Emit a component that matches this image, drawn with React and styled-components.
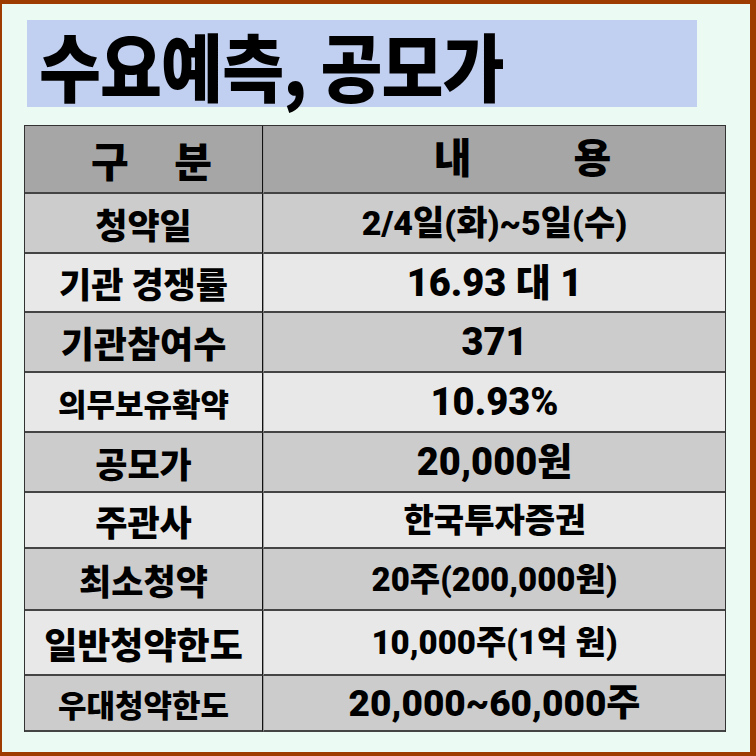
import React from "react";
import styled, { createGlobalStyle } from "styled-components";

const Global = createGlobalStyle`
  html, body { margin: 0; padding: 0; }
  body { font-family: "Noto Sans CJK KR", "Noto Sans", sans-serif; }
`;

const Frame = styled.div`
  width: 756px;
  height: 756px;
  box-sizing: border-box;
  border-style: solid;
  border-color: #9e3b00;
  border-width: 4px 6px 4px 2px;
  background: #ecfaf4;
  padding: 16px 0 0 22px;
  display: flex;
  flex-direction: column;
`;

const TitleBox = styled.div`
  margin-left: 3px;
  width: 670px;
  height: 87px;
  background: #c1cff0;
  display: flex;
  align-items: center;
  padding-left: 12px;
  box-sizing: border-box;
`;

const Title = styled.h1`
  margin: 0;
  font-family: "Noto Sans CJK KR", sans-serif;
  font-weight: 900;
  font-size: 74px;
  letter-spacing: -1px;
  color: #000;
  line-height: 1;
  white-space: nowrap;
  transform: scaleX(0.91);
  transform-origin: left center;
`;

const Table = styled.div`
  margin-top: 18px;
  width: 702px;
  display: grid;
  grid-template-columns: 238px 1fr;
  border-top: 1px solid #333;
  border-left: 1px solid #333;
  border-right: 1px solid #333;
  box-sizing: border-box;
`;

const Cell = styled.div`
  height: ${(p) => p.$h}px;
  box-sizing: border-box;
  background: ${(p) => p.$bg};
  border-bottom: 2px solid #444;
  display: flex;
  align-items: center;
  justify-content: center;
  color: #000;
  line-height: 1;
  white-space: pre;
  font-size: ${(p) => p.$fs}px;
  letter-spacing: ${(p) => p.$ls || 0}px;
  padding-left: ${(p) => p.$pl || 0}px;
`;

const LabelCell = styled(Cell)`
  border-right: 1px solid #111;
  font-family: "Noto Sans CJK KR", sans-serif;
  font-weight: 900;
`;

const ValueCell = styled(Cell)`
  border-left: 1px solid #9a9a9a;
  font-family: Roboto, "Noto Sans CJK KR", sans-serif;
  font-weight: 900;
`;

const HEADER_BG = "#a6a6a6";
const DARK = "#cccccc";
const LIGHT = "#e8e8e8";

const rows = [
  { label: "청약일", value: "2/4일(화)~5일(수)", h: 60, lf: 35, vf: 34 },
  { label: "기관 경쟁률", value: "16.93 대 1", h: 59, lf: 35, vf: 38 },
  { label: "기관참여수", value: "371", h: 60, lf: 36, vf: 38 },
  { label: "의무보유확약", value: "10.93%", h: 60, lf: 31, vf: 38 },
  { label: "공모가", value: "20,000원", h: 60, lf: 35, vf: 38 },
  { label: "주관사", value: "한국투자증권", h: 56, lf: 35, vf: 33 },
  { label: "최소청약", value: "20주(200,000원)", h: 62, lf: 35, vf: 33 },
  { label: "일반청약한도", value: "10,000주(1억 원)", h: 65, lf: 36, vf: 33 },
  { label: "우대청약한도", value: "20,000~60,000주", h: 56, lf: 31, vf: 37 },
];

export default function App() {
  return (
    <>
      <Global />
      <Frame>
        <TitleBox>
          <Title>수요예측, 공모가</Title>
        </TitleBox>
        <Table>
          <LabelCell $h={68} $bg={HEADER_BG} $fs={41} $ls={18} $pl={34}>
            구 분
          </LabelCell>
          <ValueCell $h={68} $bg={HEADER_BG} $fs={41} $pl={56}>
            {"내          용"}
          </ValueCell>
          {rows.map((r, i) => {
            const bg = i % 2 === 0 ? DARK : LIGHT;
            return (
              <React.Fragment key={r.label}>
                <LabelCell $h={r.h} $bg={bg} $fs={r.lf}>
                  {r.label}
                </LabelCell>
                <ValueCell $h={r.h} $bg={bg} $fs={r.vf}>
                  {r.value}
                </ValueCell>
              </React.Fragment>
            );
          })}
        </Table>
      </Frame>
    </>
  );
}
